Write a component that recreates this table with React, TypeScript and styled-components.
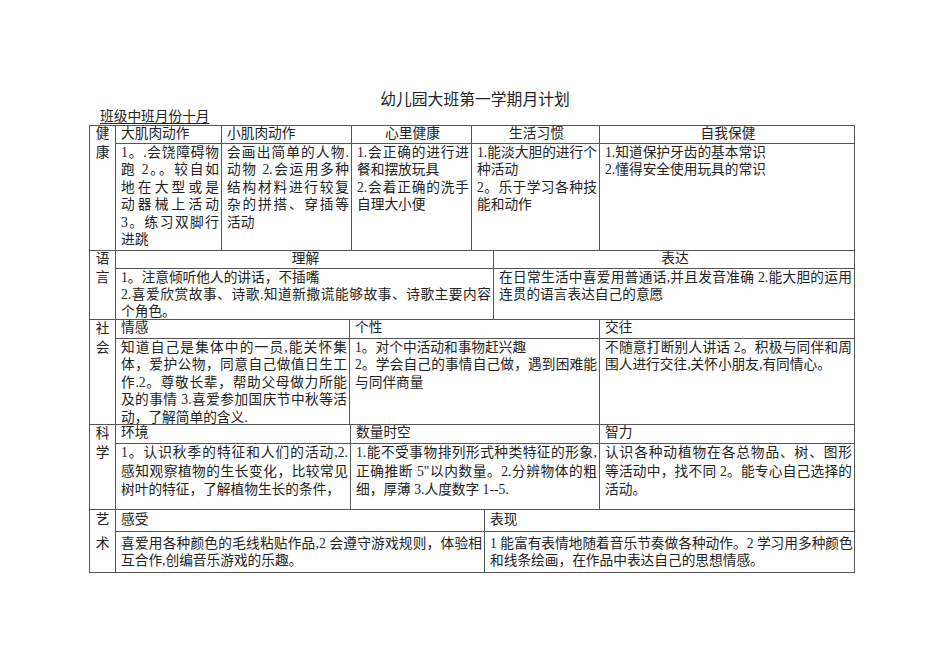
import styled, { createGlobalStyle } from 'styled-components';

const GlobalStyle = createGlobalStyle`
  html, body {
    margin: 0;
    padding: 0;
    background: #fff;
  }
  body {
    font-family: "Liberation Serif", "Noto Sans CJK SC", serif;
    color: #222;
  }
`;

type Head = { text: string; center?: boolean };
type Section = {
  label: [string, string];
  cols: string;
  head: number;
  body: number;
  pad: number;
  lh: number;
  heads: Head[];
  bodies: string[][][];
};

const sections: Section[] = [
  {
    label: ['健', '康'],
    cols: '26px 106px 130px 120px 128px 255px',
    head: 18,
    body: 107,
    pad: 0,
    lh: 17.4,
    heads: [
      { text: '大肌肉动作' },
      { text: '小肌肉动作' },
      { text: '心里健康', center: true },
      { text: '生活习惯', center: true },
      { text: '自我保健', center: true },
    ],
    bodies: [
      [['1。.会饶障碍物', '跑 2。。较自如', '地在大型或是', '动器械上活动', '3。练习双脚行', '进跳']],
      [['会画出简单的人物.', '动物 2.会运用多种', '结构材料进行较复', '杂的拼搭、穿插等', '活动']],
      [
        ['1.会正确的进行进', '餐和摆放玩具'],
        ['2.会着正确的洗手', '自理大小便'],
      ],
      [
        ['1.能淡大胆的进行个', '种活动'],
        ['2。乐于学习各种技', '能和动作'],
      ],
      [['1.知道保护牙齿的基本常识'], ['2.懂得安全使用玩具的常识']],
    ],
  },
  {
    label: ['语', '言'],
    cols: '26px 378px 361px',
    head: 18,
    body: 51,
    pad: 0,
    lh: 17.2,
    heads: [
      { text: '理解', center: true },
      { text: '表达', center: true },
    ],
    bodies: [
      [
        ['1。注意倾听他人的讲话，不插嘴'],
        ['2.喜爱欣赏故事、诗歌.知道新撒谎能够故事、诗歌主要内容', '个角色。'],
      ],
      [['在日常生活中喜爱用普通话,并且发音准确 2.能大胆的运用', '连贯的语言表达自己的意愿']],
    ],
  },
  {
    label: ['社', '会'],
    cols: '26px 234px 250px 255px',
    head: 19,
    body: 86,
    pad: 0,
    lh: 17.4,
    heads: [{ text: '情感' }, { text: '个性' }, { text: '交往' }],
    bodies: [
      [
        [
          '知道自己是集体中的一员,能关怀集',
          '体，爱护公物，同意自己做值日生工',
          '作.2。尊敬长辈，帮助父母做力所能',
          '及的事情 3.喜爱参加国庆节中秋等活',
          '动，了解简单的含义.',
        ],
      ],
      [['1。对个中活动和事物赶兴趣'], ['2。学会自己的事情自己做，遇到困难能', '与同伴商量']],
      [['不随意打断别人讲话 2。积极与同伴和周', '围人进行交往,关怀小朋友,有同情心。']],
    ],
  },
  {
    label: ['科', '学'],
    cols: '26px 235px 249px 255px',
    head: 19,
    body: 66,
    pad: 0,
    lh: 18.6,
    heads: [{ text: '环境' }, { text: '数量时空' }, { text: '智力' }],
    bodies: [
      [['1。认识秋季的特征和人们的活动,2.', '感知观察植物的生长变化，比较常见', '树叶的特征，了解植物生长的条件，']],
      [['1.能不受事物排列形式种类特征的形象,', '正确推断 5"以内数量。2.分辨物体的粗', '细，厚薄 3.人度数字 1--5.']],
      [['认识各种动植物在各总物品、树、图形', '等活动中，找不同 2。能专心自己选择的', '活动。']],
    ],
  },
  {
    label: ['艺', '术'],
    cols: '26px 369px 370px',
    head: 22,
    body: 41,
    pad: 3,
    lh: 17.4,
    heads: [{ text: '感受' }, { text: '表现' }],
    bodies: [
      [['喜爱用各种颜色的毛线粘贴作品,2 会遵守游戏规则，体验相', '互合作,创编音乐游戏的乐趣。']],
      [['1 能富有表情地随着音乐节奏做各种动作。2 学习用多种颜色', '和线条绘画，在作品中表达自己的思想情感。']],
    ],
  },
];

const App = () => {
  return (
    <Page>
      <GlobalStyle />
      <Title>幼儿园大班第一学期月计划</Title>
      <ClassLine>班级中班月份十月</ClassLine>
      <Table>
        {sections.map((s) => (
          <Block key={s.label.join('')} $cols={s.cols} $head={s.head} $body={s.body}>
            <LabelTop>{s.label[0]}</LabelTop>
            {s.heads.map((h) => (
              <HeadCell key={h.text} $center={h.center}>
                {h.text}
              </HeadCell>
            ))}
            <LabelBottom $pad={s.pad} $lh={s.lh}>
              {s.label[1]}
            </LabelBottom>
            {s.bodies.map((paras, i) => (
              <BodyCell key={i} $pad={s.pad} $lh={s.lh}>
                {paras.map((lines, j) => (
                  <p key={j}>
                    {lines.map((line, k) => (
                      <Line key={k} $spread={k < lines.length - 1}>
                        {line}
                      </Line>
                    ))}
                  </p>
                ))}
              </BodyCell>
            ))}
          </Block>
        ))}
      </Table>
    </Page>
  );
};
export default App;

const Page = styled.div`
  width: 950px;
  height: 672px;
  box-sizing: border-box;
  padding-top: 91px;
  font-size: 13.7px;
`;
const Title = styled.h1`
  margin: 0;
  text-align: center;
  font-size: 15.8px;
  font-weight: normal;
  line-height: 18px;
`;
const ClassLine = styled.div`
  margin-left: 100px;
  line-height: 16px;
  text-decoration: underline;
  text-underline-offset: 2px;
`;
const Table = styled.div`
  margin-left: 89px;
  width: 766px;
  box-sizing: border-box;
  border-top: 1px solid #555;
  border-left: 1px solid #555;
`;
const Block = styled.div<{ $cols: string; $head: number; $body: number }>`
  display: grid;
  grid-template-columns: ${(p) => p.$cols};
  grid-template-rows: ${(p) => `${p.$head}px ${p.$body}px`};
`;
const LabelTop = styled.div`
  box-sizing: border-box;
  border-right: 1px solid #555;
  display: flex;
  align-items: center;
  justify-content: center;
  line-height: 1;
  padding-bottom: 2px;
`;
const LabelBottom = styled.div<{ $pad: number; $lh: number }>`
  box-sizing: border-box;
  border-right: 1px solid #555;
  border-bottom: 1px solid #555;
  padding-top: ${(p) => p.$pad}px;
  line-height: ${(p) => p.$lh}px;
  text-align: center;
`;
const HeadCell = styled.div<{ $center?: boolean }>`
  box-sizing: border-box;
  border-right: 1px solid #555;
  border-bottom: 1px solid #555;
  padding: 0 3px 2px 5px;
  display: flex;
  align-items: center;
  justify-content: ${(p) => (p.$center ? 'center' : 'flex-start')};
  line-height: 1;
  white-space: nowrap;
`;
const BodyCell = styled.div<{ $pad: number; $lh: number }>`
  box-sizing: border-box;
  border-right: 1px solid #555;
  border-bottom: 1px solid #555;
  padding: ${(p) => p.$pad}px 2px 0 5px;
  line-height: ${(p) => p.$lh}px;
  p {
    margin: 0;
  }
`;
const Line = styled.div<{ $spread: boolean }>`
  white-space: nowrap;
  text-align: left;
  text-align-last: ${(p) => (p.$spread ? 'justify' : 'left')};
  text-justify: inter-character;
`;
